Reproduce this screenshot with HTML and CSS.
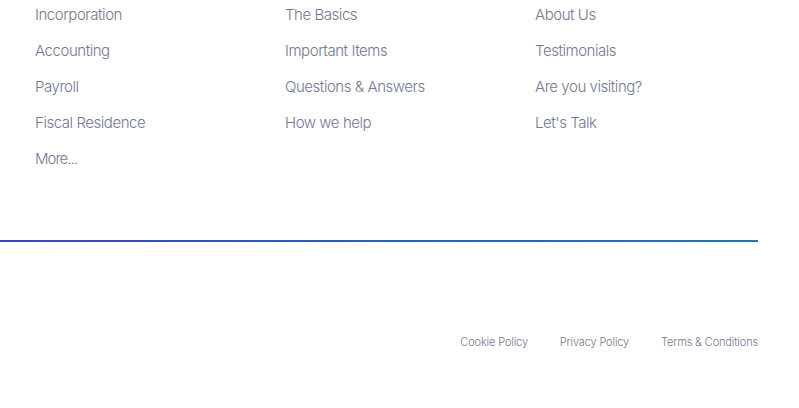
FILE: index.html
```html
<!DOCTYPE html>
<html lang="en">
<head>
<meta charset="utf-8">
<title>Footer</title>
<link rel="stylesheet" href="styles.css">
</head>
<body>
<footer class="footer">
  <div class="cols">
    <ul class="col">
      <li><a href="#">Incorporation</a></li>
      <li><a href="#">Accounting</a></li>
      <li><a href="#">Payroll</a></li>
      <li><a href="#">Fiscal Residence</a></li>
      <li><a href="#" class="more">More...</a></li>
    </ul>
    <ul class="col">
      <li><a href="#">The Basics</a></li>
      <li><a href="#">Important Items</a></li>
      <li><a href="#">Questions &amp; Answers</a></li>
      <li><a href="#">How we help</a></li>
    </ul>
    <ul class="col">
      <li><a href="#">About Us</a></li>
      <li><a href="#">Testimonials</a></li>
      <li><a href="#">Are you visiting?</a></li>
      <li><a href="#">Let's Talk</a></li>
    </ul>
  </div>
  <div class="rule"></div>
  <nav class="legal">
    <a href="#">Cookie Policy</a>
    <a href="#">Privacy Policy</a>
    <a href="#">Terms &amp; Conditions</a>
  </nav>
</footer>
</body>
</html>
```
FILE: styles.css
```css
* { box-sizing: border-box; }
html, body { margin: 0; padding: 0; background: #ffffff; }
body { font-family: Inter, "Noto Sans", sans-serif; color: #737891; }
.footer { width: 758px; }
.cols { display: flex; padding: 4px 0 0 35px; }
.col { list-style: none; margin: 0; padding: 0; width: 250px; flex: 0 0 250px; display: flex; flex-direction: column; gap: 16px; }
.col li { height: 20px; line-height: 20px; }
.col a { color: #737891; text-decoration: none; font-size: 15px; font-weight: 300; letter-spacing: -0.45px; }
.col a.more { letter-spacing: -1px; }
.rule { margin-top: 72px; height: 2px; background: linear-gradient(90deg, #3a44c4 0%, #1a78b8 100%); }
.legal { display: flex; justify-content: flex-end; gap: 32px; margin-top: 92px; }
.legal a { color: #737891; text-decoration: none; font-size: 11px; font-weight: 300; line-height: 16px; letter-spacing: -0.15px; }
```
